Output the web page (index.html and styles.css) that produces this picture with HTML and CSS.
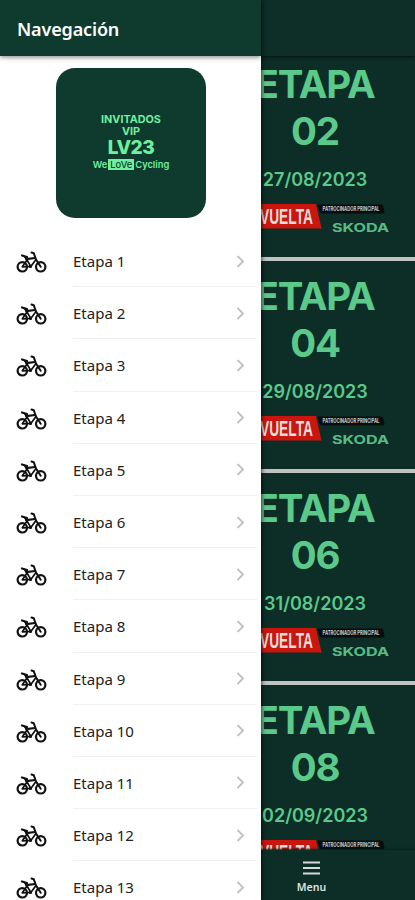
FILE: index.html
```
<!DOCTYPE html>
<html lang="es">
<head>
<meta charset="utf-8">
<title>Navegación</title>
<link rel="stylesheet" href="styles.css">
</head>
<body>
<svg width="0" height="0" class="defs">
  <defs>
    <symbol id="bike" viewBox="0 0 30 23">
      <g fill="none" stroke="#111" stroke-linejoin="round" stroke-linecap="round">
        <circle cx="5.800" cy="15.800" r="4.700" stroke-width="2.200"/>
        <circle cx="24.200" cy="15.800" r="4.700" stroke-width="2.200"/>
        <path d="M5.800 15.800 10.500 9 14.300 15.400 6 15.800M10.500 9 8 5.500M14.300 15.400 19.500 8.500" stroke-width="1.700"/>
        <path d="M5.500 4.500 10.500 6M9.800 8.200 18.500 7" stroke-width="2.200"/>
        <path d="M15 1.500 17.300 2.300 19.500 8.500 24.200 15.800" stroke-width="2"/>
        <circle cx="14" cy="15.400" r="1" stroke-width="1.300"/>
      </g>
    </symbol>
    <symbol id="sponsors" viewBox="0 0 200 42">
      <path d="M0 1H101L106.500 25.500H0z" fill="#c9170f"/>
      <text x="45" y="20.600" class="vuelta" textLength="53" lengthAdjust="spacingAndGlyphs">VUELTA</text>
      <path d="M102.500 1.500H166q2 0 2.300 2L169.500 8.500q0 2-2 2H107q-2 0-2.500-2z" fill="#080c0c"/>
      <text x="107.500" y="8.200" class="sponsor-label" textLength="57" lengthAdjust="spacingAndGlyphs">PATROCINADOR PRINCIPAL</text>
      <text x="117" y="28.600" class="skoda" textLength="57" lengthAdjust="spacingAndGlyphs">SKODA</text>
    </symbol>
  </defs>
</svg>
<div class="page">
  <header class="page-header"></header>
  <main class="cards" id="cards"></main>
  <nav class="tabbar">
    <svg class="burger" viewBox="0 0 17 14"><path d="M0 1.500H17M0 7H17M0 12.500H17" stroke="#d5dad8" stroke-width="1.900"/></svg>
    <span>Menu</span>
  </nav>
</div>
<aside class="drawer">
  <header class="drawer-header"><h1>Navegación</h1></header>
  <div class="logo">
    <div class="logo-small">INVITADOS</div>
    <div class="logo-small">VIP</div>
    <div class="logo-big">LV23</div>
    <div class="logo-tag"><span>We</span><b>LoVe</b><span>Cycling</span></div>
  </div>
  <ul class="list" id="list"></ul>
</aside>
<script src="app.js"></script>
</body>
</html>
```
FILE: styles.css
```
* { box-sizing: border-box; }
body {
  margin: 0;
  height: 900px;
  overflow: hidden;
  position: relative;
  background: #0d2e27;
  font-family: "Noto Sans", sans-serif;
}
.defs { display: block; }
.page { height: 900px; display: flex; flex-direction: column; }
.page-header {
  flex: none;
  height: 56px;
  background: #0d2f27;
  box-shadow: 0 1px 3px #04130f;
  z-index: 1;
}
.cards {
  flex: 1;
  min-height: 0;
  overflow: hidden;
  display: flex;
  flex-direction: column;
  margin-top: -7px;
}
.card {
  flex: none;
  height: 212px;
  padding: 12px 0 0 215px;
  border-bottom: 4px solid #bfc3c1;
  background: #0d2e27;
  color: #5bc98a;
  text-align: center;
  font-family: Inter, sans-serif;
}
.card h2 { margin: 0; font-size: 38.500px; line-height: 46.500px; font-weight: 700; letter-spacing: -1.200px; }
.card p { margin: 14px 0 0; font-size: 18px; line-height: 24px; font-weight: 600; }
.card svg { display: block; width: 200px; height: 42px; margin-top: 11px; }
.vuelta { font: 700 22px "Liberation Sans", sans-serif; fill: #e5dddb; }
.sponsor-label { font: 700 6px Inter, sans-serif; fill: #c9cccb; }
.skoda { font: 700 12px Inter, sans-serif; fill: #58bd85; }
.tabbar {
  flex: none;
  height: 50px;
  padding: 11px 0 0 208px;
  background: #0d2e27;
  box-shadow: 0 -1px 2px #081f1a;
  display: flex;
  flex-direction: column;
  align-items: center;
  color: #dfe3e1;
  font-size: 10.500px;
  line-height: 14px;
  font-weight: 600;
  z-index: 1;
}
.burger { width: 17px; height: 14px; margin-bottom: 5px; }
.drawer {
  position: absolute;
  top: 0;
  left: 0;
  width: 261px;
  height: 900px;
  overflow: hidden;
  background: #fff;
  box-shadow: 1px 0 4px #000a;
  z-index: 2;
}
.drawer-header {
  height: 56px;
  display: flex;
  align-items: center;
  padding: 1px 17px 0;
  background: #0f3b2f;
  box-shadow: 0 1px 5px #0008;
}
.drawer-header h1 { margin: 0; color: #fff; font-size: 18px; font-weight: 600; letter-spacing: -.150px; }
.logo {
  width: 150px;
  height: 150px;
  margin: 12px 0 17px 56px;
  padding-top: 46px;
  border-radius: 19px;
  background: #0f3b2f;
  color: #6ff09f;
  text-align: center;
  font-family: Inter, sans-serif;
}
.logo-small { font-size: 10.800px; line-height: 11.500px; font-weight: 700; }
.logo-big { font-size: 19px; line-height: 22px; font-weight: 800; letter-spacing: -.500px; }
.logo-tag { display: flex; justify-content: center; align-items: center; font-size: 9.300px; line-height: 11px; font-weight: 600; }
.logo-tag b { background: #6ff09f; color: #0f3b2f; width: 26px; height: 11px; margin: 0 1px; font-weight: 500; }
.list { margin: 0; padding: 0; list-style: none; }
.row { display: flex; height: 52.200px; padding-left: 16px; }
.row svg.bike { width: 31px; height: 23px; margin: 16px 26px 0 0; }
.row-body {
  width: 184px;
  display: flex;
  align-items: center;
  justify-content: space-between;
  padding: 1px 12px 0 0;
  border-bottom: 1px solid #f1f1f1;
  font-size: 15px;
  color: #222;
}
.chevron { width: 9px; height: 13px; }
```
FILE: app.js
```
const stages = [["02", "27/08/2023"], ["04", "29/08/2023"], ["06", "31/08/2023"], ["08", "02/09/2023"]];
document.getElementById("cards").innerHTML = stages.map(([n, d]) => `
  <article class="card"><h2>ETAPA<br>${n}</h2><p>${d}</p>
  <svg viewBox="0 0 200 42"><use href="#sponsors"/></svg></article>`).join("");
document.getElementById("list").innerHTML = Array.from({ length: 13 }, (_, i) => `
  <li class="row"><svg class="bike"><use href="#bike"/></svg>
  <div class="row-body"><span>Etapa ${i + 1}</span>
  <svg class="chevron" viewBox="0 0 9 13"><path d="M1.500 1 7 6.500 1.500 12" fill="none" stroke="#c2c2c4" stroke-width="1.900"/></svg></div></li>`).join("");
```
